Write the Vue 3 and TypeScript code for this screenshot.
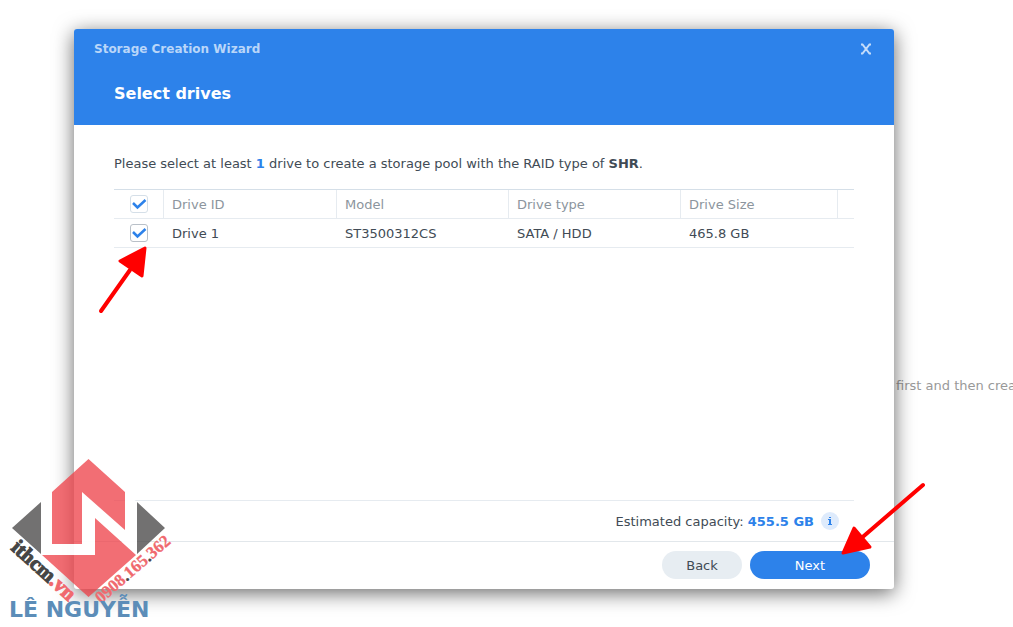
<script setup lang="ts">
import { computed, ref } from 'vue'

interface Drive {
  id: string
  model: string
  type: string
  size: string
  selected: boolean
}

const drives = ref<Drive[]>([
  { id: 'Drive 1', model: 'ST3500312CS', type: 'SATA / HDD', size: '465.8 GB', selected: true },
])

const allSelected = computed<boolean>({
  get: () => drives.value.every((d) => d.selected),
  set: (value) => drives.value.forEach((d) => (d.selected = value)),
})
</script>

<template>
  <div class="desktop">
    <p class="behind">first and then crea</p>

    <section class="wizard" role="dialog" aria-labelledby="wizard-title">
      <header class="head">
        <div class="titlebar">
          <span id="wizard-title" class="title">Storage Creation Wizard</span>
          <button class="close" type="button" aria-label="Close">
            <svg width="12" height="12" viewBox="0 0 12 12">
              <path d="M1 1.500H2.500L9.500 10.500H11M1 10.500H2.500L9.500 1.500H11" />
            </svg>
          </button>
        </div>
        <h1 class="step">Select drives</h1>
      </header>

      <div class="body">
        <p class="intro">
          Please select at least <b class="accent">1</b> drive to create a storage pool with the RAID type of
          <b>SHR</b>.
        </p>
        <table class="drives">
          <colgroup>
            <col class="c-check" />
            <col class="c-id" />
            <col class="c-mid" />
            <col class="c-mid" />
            <col />
            <col class="c-end" />
          </colgroup>
          <thead>
            <tr>
              <th class="check"><input v-model="allSelected" type="checkbox" aria-label="Select all drives" /></th>
              <th>Drive ID</th>
              <th>Model</th>
              <th>Drive type</th>
              <th>Drive Size</th>
              <th></th>
            </tr>
          </thead>
          <tbody>
            <tr v-for="d in drives" :key="d.id">
              <td class="check"><input v-model="d.selected" type="checkbox" :aria-label="d.id" /></td>
              <td>{{ d.id }}</td>
              <td>{{ d.model }}</td>
              <td>{{ d.type }}</td>
              <td>{{ d.size }}</td>
              <td></td>
            </tr>
          </tbody>
        </table>
        <div class="capacity">
          <span class="amount">Estimated capacity: <b class="accent">455.5 GB</b></span>
          <svg class="info" width="18" height="18" viewBox="0 0 18 18">
            <circle cx="9" cy="9" r="9" fill="#deebfc" />
            <path d="M8 5h2v1H8zM7 7h3v5h1v1H7v-1h1V8H7z" fill="#2d82ea" />
          </svg>
        </div>
      </div>

      <footer class="foot">
        <button class="btn back" type="button">Back</button>
        <button class="btn next" type="button">Next</button>
      </footer>
    </section>

    <svg class="arrow first" width="60" height="76" viewBox="0 0 60 76">
      <path d="M5 67L34 26" stroke="#f00" stroke-width="4" stroke-linecap="round" />
      <path d="M49 4L24 17L46 32Z" fill="#f00" stroke="#f00" stroke-width="3" stroke-linejoin="round" />
    </svg>
    <svg class="arrow second" width="92" height="84" viewBox="0 0 92 84">
      <path d="M87 10L22 66" stroke="#f00" stroke-width="4" stroke-linecap="round" />
      <path d="M7 78L18 53L34 72Z" fill="#f00" stroke="#f00" stroke-width="3" stroke-linejoin="round" />
    </svg>

    <svg class="logo" width="180" height="172" viewBox="0 455 180 172">
      <path d="M41 502V554L12 528ZM137 502V554L165 528Z" fill="#464444" fill-opacity=".76" />
      <path d="M41 502V555H95V518L137 555V502L125 492V530L82 492V544H52V492Z" fill="#fff" fill-opacity=".95" />
      <path
        d="M88.500 459L125 492V530L82 492V544H52V492ZM42 555H95V518L136 555L88.500 597Z"
        fill="#ee4048"
        fill-opacity=".76"
      />
      <text class="mark site" transform="translate(10 549) rotate(42)">ithcm<tspan class="red">.vn</tspan></text>
      <text class="mark phone" transform="translate(101 604) rotate(-41)">0908<tspan class="dark">.</tspan>165<tspan class="dark">.</tspan>362</text>
      <text class="name" x="9" y="617">LÊ NGUYỄN</text>
    </svg>
  </div>
</template>

<style>
body {
  margin: 0;
  background: #fff;
}
</style>

<style scoped>
.desktop {
  position: relative;
  box-sizing: border-box;
  display: flex;
  min-height: 100vh;
  padding: 29px 119px 38px 74px;
  overflow: hidden;
  font: 13px/20px Verdana, "DejaVu Sans", sans-serif;
  color: #414b55;
}

.behind {
  position: absolute;
  top: 376px;
  left: calc(100% - 117px);
  margin: 0;
  white-space: nowrap;
  color: #999;
}

.wizard {
  position: relative;
  display: flex;
  flex: 1;
  flex-direction: column;
  min-width: 0;
  border-radius: 3px;
  background: #fff;
  box-shadow: 0 4px 20px rgba(0, 0, 0, 0.6);
}

.head {
  height: 96px;
  border-radius: 3px 3px 0 0;
  background: #2d82ea;
  color: #fff;
}

.titlebar {
  display: flex;
  align-items: center;
  justify-content: space-between;
  height: 40px;
  padding: 0 20px;
}

.title {
  font-size: 12px;
  font-weight: bold;
  color: #b9d6f9;
}

.close {
  display: flex;
  padding: 2px;
  border: 0;
  background: none;
}

.close path {
  fill: none;
  stroke: #c4dcfa;
  stroke-width: 2;
}

.step {
  margin: 13px 40px 0;
  font-size: 16px;
  line-height: 24px;
}

.body {
  display: flex;
  flex: 1;
  flex-direction: column;
  padding: 29px 40px 0;
}

.intro {
  margin: 0 0 15px;
}

.accent {
  color: #2d82ea;
}

.drives {
  width: 100%;
  table-layout: fixed;
  border-collapse: separate;
  border-spacing: 0;
  border-top: 1px solid #d5dfe8;
}

.c-check {
  width: 50px;
}

.c-id {
  width: 173px;
}

.c-mid {
  width: 172px;
}

.c-end {
  width: 16px;
}

.drives th,
.drives td {
  height: 26px;
  padding: 2px 8px 0;
  border-bottom: 1px solid #e6ebf0;
  text-align: left;
}

.drives th {
  border-right: 1px solid #e6ebf0;
  font-weight: normal;
  color: #8c959d;
}

.drives th:last-child {
  border-right: 0;
}

.drives .check {
  height: 28px;
  padding: 0;
  text-align: center;
}

input[type='checkbox'] {
  display: block;
  box-sizing: border-box;
  width: 18px;
  height: 18px;
  margin: 0 auto;
  appearance: none;
  border: 1px solid #b9c0c8;
  border-radius: 3px;
  background: #fff;
}

th input[type='checkbox'] {
  border-color: #d5dfe8;
}

input[type='checkbox']:checked {
  background: #fff
    url("data:image/svg+xml,%3Csvg xmlns='http://www.w3.org/2000/svg' viewBox='0 0 16 16'%3E%3Cpath d='M2 7L6.500 11.500L14.500 4' fill='none' stroke='%232d82ea' stroke-width='2.500'/%3E%3C/svg%3E")
    center / 16px 16px no-repeat;
}

.capacity {
  display: flex;
  align-items: center;
  justify-content: flex-end;
  gap: 7px;
  height: 40px;
  margin-top: auto;
  padding-right: 15px;
  border-top: 1px solid #e6ebf0;
}

.amount {
  padding-top: 2px;
}

.foot {
  display: flex;
  justify-content: flex-end;
  gap: 8px;
  padding: 9px 24px 10px;
  border-top: 1px solid #e2e7eb;
}

.btn {
  height: 28px;
  padding: 2px 0 0;
  border: 0;
  border-radius: 14px;
  font: inherit;
}

.back {
  width: 80px;
  background: #e7edf2;
  color: #414b55;
}

.next {
  width: 120px;
  background: #2d82ea;
  color: #fff;
}

.arrow,
.logo {
  position: absolute;
  fill: none;
  pointer-events: none;
}

.first {
  top: 244px;
  left: 96px;
}

.second {
  top: 475px;
  right: 85px;
}

.logo {
  bottom: 0;
  left: 0;
}

.mark {
  font-family: "Liberation Serif", serif;
  font-weight: bold;
}

.site {
  font-size: 21px;
  fill: #454545;
  stroke: #454545;
}

.phone {
  font-size: 17px;
  fill: #f0696e;
  stroke: #f0696e;
  stroke-width: 0.3;
}

.red {
  fill: #f0696e;
  stroke: #f0696e;
}

.dark {
  fill: #454545;
  stroke: #454545;
}

.name {
  font: bold 22px "DejaVu Sans", sans-serif;
  fill: #5c8db8;
}
</style>
